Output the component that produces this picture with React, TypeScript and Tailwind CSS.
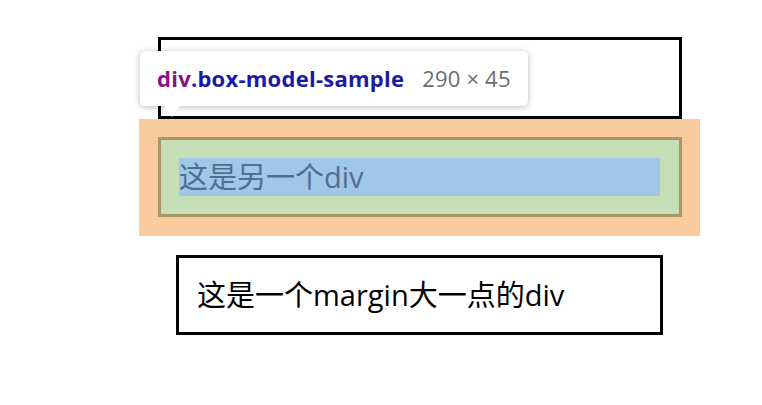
const cjk = { fontFamily: '"Open Sans", "Noto Sans CJK SC", sans-serif' };

function Tooltip() {
  return (
    <div className="absolute left-[140px] top-[51px] z-10">
      <div
        className="flex h-[55px] items-center gap-[18px] rounded-[5px] bg-white px-[17px] text-[22px] shadow-[0_1px_6px_rgba(0,0,0,0.28)]"
        style={{ fontFamily: '"Open Sans", sans-serif' }}
      >
        <span className="font-bold tracking-[0.25px]">
          <span className="text-[#881280]">div</span>
          <span className="text-[#1a1aa6]">.box-model-sample</span>
        </span>
        <span className="tracking-[0.2px] text-[#6e6e6e]">290 × 45</span>
      </div>
      <div className="ml-[24px] h-0 w-0 border-x-[8px] border-t-[11px] border-x-transparent border-t-white" />
    </div>
  );
}

export default function App() {
  return (
    <div className="relative h-[405px] w-[762px] overflow-hidden bg-white" style={cjk}>
      <Tooltip />

      {/* first div, covered by the tooltip */}
      <div className="ml-[158px] mt-[37px] h-[82px] w-[524px] border-[3px] border-black" />

      {/* highlighted element: margin / border / padding / content */}
      <div className="ml-[139px] w-[561px] bg-[#f9cb9c] px-[19px] pb-[19px] pt-[18px]">
        <div className="h-[80px] w-[524px] border-[3px] border-[#a89765] bg-[#c4dfb7] p-[18px]">
          <div className="h-[38px] w-[481px] bg-[#a0c6e8] text-[29px] leading-[38px] text-[#4f6f91]">
            这是另一个div
          </div>
        </div>
      </div>

      <div className="ml-[176px] mt-[19px] flex h-[80px] w-[487px] items-center border-[3px] border-black pl-[18px] text-[29px] leading-[38px] text-black">
        这是一个margin大一点的div
      </div>
    </div>
  );
}
